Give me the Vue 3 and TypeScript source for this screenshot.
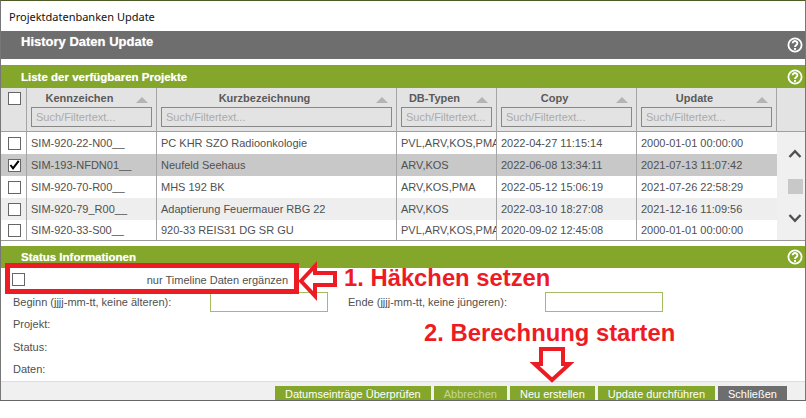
<script setup lang="ts">
interface Project { id: string; name: string; types: string; copy: string; update: string; checked?: boolean }

const columns = ['Kennzeichen', 'Kurzbezeichnung', 'DB-Typen', 'Copy', 'Update']
const projects: Project[] = [
  { id: 'SIM-920-22-N00__', name: 'PC KHR SZO Radioonkologie', types: 'PVL,ARV,KOS,PMA', copy: '2022-04-27 11:15:14', update: '2000-01-01 00:00:00' },
  { id: 'SIM-193-NFDN01__', name: 'Neufeld Seehaus', types: 'ARV,KOS', copy: '2022-06-08 13:34:11', update: '2021-07-13 11:07:42', checked: true },
  { id: 'SIM-920-70-R00__', name: 'MHS 192 BK', types: 'ARV,KOS,PMA', copy: '2022-05-12 15:06:19', update: '2021-07-26 22:58:29' },
  { id: 'SIM-920-79_R00__', name: 'Adaptierung Feuermauer RBG 22', types: 'ARV,KOS', copy: '2022-03-10 18:27:08', update: '2021-12-16 11:09:56' },
  { id: 'SIM-920-33-S00__', name: '920-33 REIS31 DG SR GU', types: 'PVL,ARV,KOS,PMA', copy: '2020-09-02 12:45:08', update: '2000-01-01 00:00:00' },
]
</script>

<template>
  <div class="page">
    <div class="window">
      <div class="title">Projektdatenbanken Update</div>

      <div class="bar bar-gray">
        <span>History Daten Update</span>
        <svg class="help" viewBox="0 0 16 16"><circle cx="8" cy="8" r="6.6" fill="none" stroke="#fff" stroke-width="1.8" /><path d="M5.6 6.3a2.4 2.2 0 1 1 3.7 1.8c-.9.6-1.3 1-1.3 2" fill="none" stroke="#fff" stroke-width="1.9" /><rect x="7" y="11" width="2" height="1.9" fill="#fff" /></svg>
      </div>

      <div class="bar bar-green list-bar">
        <span>Liste der verfügbaren Projekte</span>
        <svg class="help" viewBox="0 0 16 16"><circle cx="8" cy="8" r="6.6" fill="none" stroke="#fff" stroke-width="1.8" /><path d="M5.6 6.3a2.4 2.2 0 1 1 3.7 1.8c-.9.6-1.3 1-1.3 2" fill="none" stroke="#fff" stroke-width="1.9" /><rect x="7" y="11" width="2" height="1.9" fill="#fff" /></svg>
      </div>

      <div class="table">
        <div class="grid head">
          <div class="cell check-cell head-check"><span class="box"></span></div>
          <div v-for="c in columns" :key="c" class="cell head-cell">
            <div class="head-label"><span class="head-text">{{ c }}</span><i class="sort"></i></div>
            <div class="filter">Such/Filtertext...</div>
          </div>
          <div class="cell"></div>
        </div>
        <div class="body">
          <div class="rows">
            <div v-for="(p, i) in projects" :key="p.id" class="grid row" :class="{ odd: i === 3, selected: p.checked }">
              <div class="cell check-cell">
                <span class="box">
                  <svg v-if="p.checked" viewBox="0 0 12 12" width="12" height="12"><path d="M1.6 6 4.4 9.6 10.6 1.4" fill="none" stroke="#000" stroke-width="2.2" /></svg>
                </span>
              </div>
              <div class="cell text">{{ p.id }}</div>
              <div class="cell text">{{ p.name }}</div>
              <div class="cell text">{{ p.types }}</div>
              <div class="cell text">{{ p.copy }}</div>
              <div class="cell text">{{ p.update }}</div>
            </div>
          </div>
          <div class="scroll">
            <svg viewBox="0 0 14 9" width="14" height="9"><path d="M1.5 8 7 2.2 12.5 8" fill="none" stroke="#505050" stroke-width="2.4" /></svg>
            <div class="thumb"></div>
            <svg viewBox="0 0 14 9" width="14" height="9"><path d="M1.5 1 7 6.8 12.5 1" fill="none" stroke="#505050" stroke-width="2.4" /></svg>
          </div>
        </div>
      </div>

      <div class="bar bar-green status-bar">
        <span>Status Informationen</span>
        <svg class="help" viewBox="0 0 16 16"><circle cx="8" cy="8" r="6.6" fill="none" stroke="#fff" stroke-width="1.8" /><path d="M5.6 6.3a2.4 2.2 0 1 1 3.7 1.8c-.9.6-1.3 1-1.3 2" fill="none" stroke="#fff" stroke-width="1.9" /><rect x="7" y="11" width="2" height="1.9" fill="#fff" /></svg>
      </div>

      <div class="status">
        <div class="timeline">
          <span class="box"></span>
          <span>nur Timeline Daten ergänzen</span>
        </div>
        <div class="dates">
          <span class="begin-label">Beginn (jjjj-mm-tt, keine älteren):</span>
          <div class="date-input"></div>
          <span class="end-label">Ende (jjjj-mm-tt, keine jüngeren):</span>
          <div class="date-input"></div>
        </div>
        <div class="info">Projekt:</div>
        <div class="info">Status:</div>
        <div class="info">Daten:</div>
      </div>

      <div class="footer">
        <div class="btn">Datumseinträge Überprüfen</div>
        <div class="btn disabled">Abbrechen</div>
        <div class="btn">Neu erstellen</div>
        <div class="btn">Update durchführen</div>
        <div class="btn dark">Schließen</div>
      </div>
    </div>

    <svg class="arrow arrow-left" viewBox="0 0 44 44" width="44" height="44">
      <path d="M5 23 19 8v7h20v12H19v11z" fill="#fff" stroke="#ed1c24" stroke-width="4" />
    </svg>
    <div class="note note-1">1. Häkchen setzen</div>
    <div class="note note-2">2. Berechnung starten</div>
    <svg class="arrow arrow-down" viewBox="0 0 44 40" width="44" height="40">
      <path d="M22 35 4.500 19H11V4h22v15h6.500z" fill="#fff" stroke="#ed1c24" stroke-width="4" />
    </svg>
  </div>
</template>

<style>
html, body { margin: 0; background: #fff; }
</style>

<style scoped>
.page {
  position: relative;
  width: 806px;
  height: 418px;
  overflow: hidden;
  background: #fff;
  font-family: "Liberation Sans", Arial, sans-serif;
  font-size: 11px;
  color: #505050;
}
.window {
  box-sizing: border-box;
  width: 806px;
  height: 401px;
  display: flex;
  flex-direction: column;
  border-top: 1px solid #4d5c27;
  border-left: 1px solid #777;
  border-right: 1px solid #777;
  border-bottom: 1px solid #666;
  overflow: hidden;
}
.title {
  height: 30px;
  flex: none;
  padding: 7px 0 0 8px;
  box-sizing: border-box;
  font-family: "Noto Sans", sans-serif;
  font-size: 11px;
  line-height: 17px;
  color: #111;
}
.bar {
  flex: none;
  display: flex;
  justify-content: space-between;
  color: #fff;
  font-weight: bold;
  font-size: 11.5px;
  padding: 0 2px 0 20px;
  text-shadow: 0 0 1px rgba(255, 255, 255, 0.6);
}
.bar-gray { height: 28px; background: #6e6e6e; align-items: flex-start; line-height: 22px; font-size: 13px; }
.bar-gray .help { margin-top: 6px; }
.bar-green { background: #83a62b; }
.list-bar { height: 23px; margin-top: 6px; line-height: 22px; align-items: center; }
.status-bar { height: 22px; margin-top: 5px; line-height: 20px; align-items: center; }
.help { width: 16px; height: 16px; flex: none; }
.table { flex: none; border-bottom: 1px solid #999; }
.grid {
  display: grid;
  grid-template-columns: 26px 130px 240px 100px 140px 140px 28px;
}
.head { height: 44px; background: #e3e3e3; border-bottom: 1px solid #a0a0a0; box-sizing: border-box; }
.cell { border-right: 1px solid #a5a5a5; box-sizing: border-box; min-width: 0; }
.cell:last-child { border-right: 0; }
.check-cell { display: flex; justify-content: center; padding-left: 2px; }
.head-check { padding-top: 4px; }
.box {
  box-sizing: border-box;
  width: 13px;
  height: 13px;
  display: inline-flex;
  flex: none;
  border: 1px solid #666;
  background: #fff;
  align-items: center;
  justify-content: center;
}
.head-cell { padding: 0 4px; }
.head-label {
  height: 19px;
  line-height: 20px;
  display: flex;
  justify-content: center;
  position: relative;
  font-weight: bold;
  color: #5a5a5a;
  padding-right: 24px;
}
.sort {
  position: absolute;
  right: 4px;
  top: 9px;
  width: 0;
  height: 0;
  border-left: 6px solid transparent;
  border-right: 6px solid transparent;
  border-bottom: 6px solid #b4b4b4;
}
.filter {
  box-sizing: border-box;
  height: 20px;
  border: 1px solid #888;
  padding-left: 4px;
  line-height: 18px;
  color: #aaa;
  white-space: nowrap;
  overflow: hidden;
}
.body { display: flex; height: 108px; }
.rows { flex: none; width: 776px; }
.row { grid-template-columns: 26px 130px 240px 100px 140px 140px; height: 22px; background: #fff; }
.row:last-child { height: 20px; }
.row.odd { background: #eee; }
.row.selected { background: #c8c8c8; }
.row .check-cell { align-items: center; }
.text { padding-left: 4px; line-height: 22px; white-space: nowrap; overflow: hidden; }
.row:last-child .text { line-height: 21px; }
.scroll {
  flex: 1;
  background: #f0f0f0;
  display: flex;
  flex-direction: column;
  align-items: center;
  padding: 17px 0 0 8px;
  box-sizing: border-box;
}
.thumb { width: 15px; height: 15px; background: #c8c8c8; margin: 21px 0 20px; }
.status { flex: 1; min-height: 0; }
.timeline {
  position: relative;
  box-sizing: border-box;
  margin-left: 11px;
  width: 276px;
  height: 23px;
  display: flex;
  align-items: center;
  justify-content: space-between;
}
.timeline::after {
  content: "";
  position: absolute;
  left: -7px;
  right: -11px;
  top: -5px;
  bottom: -3px;
  border: 5px solid #ed1c24;
}
.dates { height: 22px; display: flex; align-items: center; padding-left: 12px; }
.begin-label { width: 197px; flex: none; }
.end-label { width: 197px; flex: none; margin-left: 20px; }
.date-input { box-sizing: border-box; width: 118px; height: 20px; border: 1px solid #a4bd65; }
.info { height: 22.500px; line-height: 22.500px; padding-left: 12px; }
.footer {
  flex: none;
  height: 19px;
  box-sizing: border-box;
  border-top: 1px solid #ddd;
  background: #f0f0f0;
  display: flex;
  gap: 3px;
  padding: 4px 0 0 274px;
}
.btn {
  height: 22px;
  line-height: 17px;
  padding: 0 10px;
  background: #83a62b;
  color: #fff;
  font-size: 11px;
  white-space: nowrap;
}
.btn.disabled { color: #c5d59a; }
.btn.dark { background: #6e6e6e; }
.arrow { position: absolute; }
.arrow-left { left: 296px; top: 258px; }
.arrow-down { left: 530px; top: 345px; }
.note {
  position: absolute;
  color: #ed1c24;
  font-weight: bold;
  font-size: 23.800px;
  line-height: 26px;
  white-space: nowrap;
}
.note-1 { left: 344px; top: 265px; }
.note-2 { left: 424px; top: 320px; }
</style>
